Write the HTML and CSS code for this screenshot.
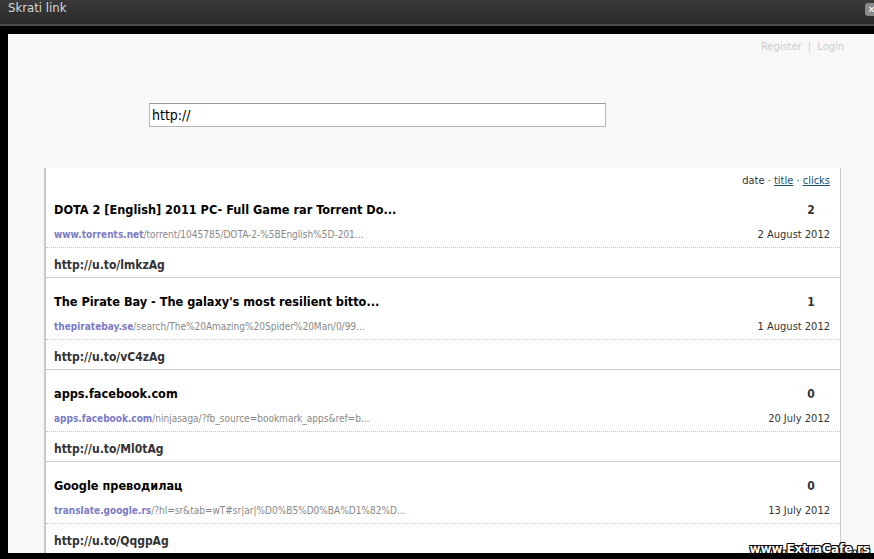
FILE: index.html
```html
<!DOCTYPE html>
<html lang="sr">

<head>
  <meta charset="UTF-8">
  <title>Skrati link</title>
  <link rel="stylesheet" href="styles.css">
</head>

<body>
  <div class="titlebar">
    <span class="title">Skrati link</span>
    <span class="close">&#x2715;</span>
  </div>

  <div class="panel">
    <div class="account">
      <a href="#">Register</a> <span class="sep">|</span> <a href="#">Login</a>
    </div>

    <form class="shorten">
      <input type="text" value="http://">
      <button type="button">Shorten now...</button>
    </form>

    <div class="links">
      <div class="sort">date &middot; <a href="#">title</a> &middot; <a href="#">clicks</a></div>

      <div class="item">
        <div class="info">
          <div class="line">
            <span class="name">DOTA 2 [English] 2011 PC- Full Game rar Torrent Do...</span>
            <span class="clicks">2</span>
          </div>
          <div class="line">
            <span class="url"><b>www.torrents.net</b>/torrent/1045785/DOTA-2-%5BEnglish%5D-201...</span>
            <span class="date">2 August 2012</span>
          </div>
        </div>
        <div class="short">http://u.to/lmkzAg</div>
      </div>

      <div class="item">
        <div class="info">
          <div class="line">
            <span class="name">The Pirate Bay - The galaxy's most resilient bitto...</span>
            <span class="clicks">1</span>
          </div>
          <div class="line">
            <span class="url"><b>thepiratebay.se</b>/search/The%20Amazing%20Spider%20Man/0/99...</span>
            <span class="date">1 August 2012</span>
          </div>
        </div>
        <div class="short">http://u.to/vC4zAg</div>
      </div>

      <div class="item">
        <div class="info">
          <div class="line">
            <span class="name">apps.facebook.com</span>
            <span class="clicks">0</span>
          </div>
          <div class="line">
            <span class="url"><b>apps.facebook.com</b>/ninjasaga/?fb_source=bookmark_apps&amp;ref=b...</span>
            <span class="date">20 July 2012</span>
          </div>
        </div>
        <div class="short">http://u.to/Ml0tAg</div>
      </div>

      <div class="item">
        <div class="info">
          <div class="line">
            <span class="name">Google преводилац</span>
            <span class="clicks">0</span>
          </div>
          <div class="line">
            <span class="url"><b>translate.google.rs</b>/?hl=sr&amp;tab=wT#sr|ar|%D0%B5%D0%BA%D1%82%D...</span>
            <span class="date">13 July 2012</span>
          </div>
        </div>
        <div class="short">http://u.to/QqgpAg</div>
      </div>
    </div>
  </div>

  <div class="watermark">www.ExtraCafe.rs</div>
</body>

</html>
```

FILE: styles.css
```css
html, body {
  margin: 0;
  padding: 0;
  height: 100%;
  overflow: hidden;
}

body {
  background-color: #000000;
  font-family: "DejaVu Sans Condensed", "DejaVu Sans", sans-serif;
  position: relative;
}

.titlebar {
  height: 24px;
  background: linear-gradient(#3a3a3a, #2a2a2a);
  border-bottom: 2px solid #4a4a4a;
  display: flex;
  justify-content: space-between;
  align-items: flex-start;
  overflow: hidden;
}

.title {
  color: #d8d8d8;
  font-size: 13px;
  line-height: 16px;
  padding-left: 8px;
}

.close {
  margin-top: 3px;
  margin-right: -4px;
  width: 13px;
  height: 13px;
  background-color: #8a8a8a;
  border-radius: 3px;
  color: #ffffff;
  font-size: 10px;
  line-height: 13px;
  text-align: center;
  font-weight: bold;
}

.panel {
  margin: 8px 0 0 8px;
  height: 519px;
  background-color: #f8f8f8;
  overflow: hidden;
}

.account {
  text-align: right;
  padding: 6px 30px 0 0;
  font-size: 11px;
  line-height: 14px;
  color: #cccccc;
}

.account a {
  color: #cccccc;
  text-decoration: none;
}

.account .sep {
  margin: 0 3px;
}

.shorten {
  display: flex;
  align-items: center;
  margin: 49px 0 0 141px;
  height: 24px;
}

.shorten input {
  width: 457px;
  height: 24px;
  box-sizing: border-box;
  border: 1px solid #b5b5b5;
  border-top-color: #999999;
  background-color: #ffffff;
  font-family: "DejaVu Sans Condensed", "DejaVu Sans", sans-serif;
  font-size: 14px;
  padding: 0 2px;
  color: #000000;
  margin: 0;
}

.shorten button {
  margin-left: 20px;
  border: none;
  background: none;
  color: #fbfbfb;
  font-family: "DejaVu Sans Condensed", "DejaVu Sans", sans-serif;
  font-size: 13px;
  padding: 0;
}

.links {
  margin: 41px 33px 0 36px;
  background-color: #ffffff;
  border-left: 2px solid #c8c8c8;
  border-right: 1px solid #cccccc;
}

.sort {
  text-align: right;
  padding: 6px 10px 0 0;
  height: 12px;
  font-size: 11px;
  line-height: 14px;
  color: #333333;
}

.sort a {
  color: #1a4f6e;
}

.item {
  border-bottom: 1px solid #cccccc;
}

.info {
  padding: 14px 10px 4px 8px;
  border-bottom: 1px dotted #c4c4c4;
}

.line {
  display: flex;
  justify-content: space-between;
  align-items: center;
}

.name {
  font-size: 12.6px;
  font-weight: bold;
  line-height: 20px;
  color: #000000;
}

.clicks {
  width: 38px;
  text-align: center;
  font-size: 12px;
  font-weight: bold;
  color: #333333;
}

.line + .line {
  margin-top: 7px;
}

.url {
  font-size: 10px;
  line-height: 16px;
  color: #888888;
}

.url b {
  color: #7b7bc4;
}

.date {
  font-size: 11px;
  line-height: 16px;
  color: #333333;
}

.short {
  padding: 8px 10px 3px 8px;
  font-size: 12px;
  font-weight: bold;
  line-height: 18px;
  color: #333333;
}

.watermark {
  position: absolute;
  right: 4px;
  bottom: 3px;
  font-family: "DejaVu Sans", sans-serif;
  font-size: 12px;
  font-weight: bold;
  color: #ffffff;
  text-shadow: 1px 1px 0 #000, -1px -1px 0 #000, 1px -1px 0 #000, -1px 1px 0 #000;
}
```
